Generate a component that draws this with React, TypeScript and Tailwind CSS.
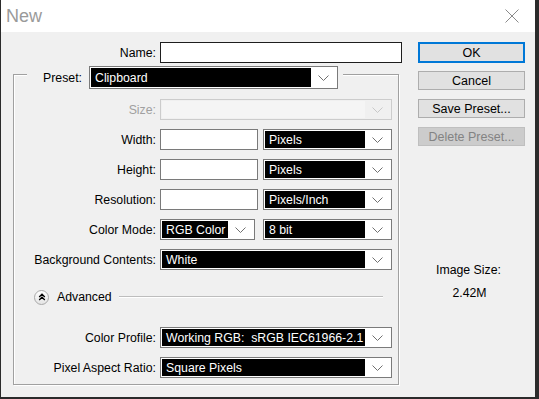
import React from 'react';

const Chevron = ({ disabled = false }: { disabled?: boolean }) => (
  <svg width="11" height="6" viewBox="0 0 11 6" className="block">
    <path d="M0.5 0.5 L5.5 5.5 L10.5 0.5" fill="none" stroke={disabled ? '#c8c8c8' : '#707070'} strokeWidth="1" />
  </svg>
);

type SelectProps = { value?: string; className?: string; disabled?: boolean };

const Select = ({ value = '', className = '', disabled = false }: SelectProps) => (
  <div
    className={`flex p-px border ${
      disabled ? 'border-[#cccccc] bg-[#f0f0f0]' : 'border-[#7a7a7a] bg-white'
    } ${className}`}
  >
    <div
      className={`flex-1 flex items-center pl-[4px] whitespace-pre ${
        disabled ? 'bg-[#f5f5f5]' : 'bg-black text-white'
      }`}
    >
      {value}
    </div>
    <div className="w-[25px] flex items-center justify-center">
      <Chevron disabled={disabled} />
    </div>
  </div>
);

const Row = ({
  label,
  disabled = false,
  children,
}: {
  label: string;
  disabled?: boolean;
  children: React.ReactNode;
}) => (
  <div className="flex items-center h-[21px]">
    <div className={`w-[142px] text-right ${disabled ? 'text-[#a0a0a0]' : 'text-black'}`}>{label}</div>
    <div className="ml-[4px] flex gap-[5px]">{children}</div>
  </div>
);

const TextBox = ({ className = '' }: { className?: string }) => (
  <input type="text" className={`h-[21px] border border-[#7a7a7a] bg-white outline-none ${className}`} />
);

const App = () => {
  return (
    <div className="w-[539px] h-[399px] flex flex-col border-l border-r-4 border-b-2 border-[#2b2b2b] font-['Liberation_Sans',Arial,sans-serif] text-[12.3px] leading-[14px] text-black">
      {/* Title bar */}
      <div className="h-[32px] bg-white flex items-center justify-between pl-[5px] pr-[16px]">
        <span className="text-[18px] leading-[20px] text-[#9a9a9a]">New</span>
        <svg width="14" height="14" viewBox="0 0 14 14">
          <path d="M0.5 0.5 L13.5 13.5 M13.5 0.5 L0.5 13.5" stroke="#8a8a8a" strokeWidth="1" fill="none" />
        </svg>
      </div>

      <div className="flex-1 bg-[#f0f0f0] flex">
        {/* Left side */}
        <div className="w-[401px] pl-[12px] pt-[10px] flex flex-col">
          <div className="flex items-center h-[21px]">
            <div className="w-[143px] text-right">Name:</div>
            <input
              type="text"
              className="ml-[4px] w-[242px] h-[21px] border border-[#1e1e1e] bg-white outline-none"
            />
          </div>

          {/* Preset group */}
          <div className="mt-[11px] w-[386px] border border-[#a0a0a0] shadow-[1px_1px_0_#ffffff,inset_1px_1px_0_#ffffff] flex flex-col pb-[6px]">
            <div className="-mt-[9px] ml-[13px] w-[316px] flex items-center bg-[#f0f0f0]">
              <div className="w-[55px] text-right">Preset:</div>
              <Select value="Clipboard" className="ml-[7px] w-[249px] h-[23px]" />
            </div>

            <div className="mt-[10px] flex flex-col gap-[9px]">
              <Row label="Size:" disabled>
                <Select disabled className="w-[232px] h-[21px]" />
              </Row>
              <Row label="Width:">
                <TextBox className="w-[98px]" />
                <Select value="Pixels" className="w-[129px] h-[21px]" />
              </Row>
              <Row label="Height:">
                <TextBox className="w-[98px]" />
                <Select value="Pixels" className="w-[129px] h-[21px]" />
              </Row>
              <Row label="Resolution:">
                <TextBox className="w-[98px]" />
                <Select value="Pixels/Inch" className="w-[129px] h-[21px]" />
              </Row>
              <Row label="Color Mode:">
                <Select value="RGB Color" className="w-[95px] h-[21px]" />
                <Select value="8 bit" className="ml-[3px] w-[129px] h-[21px]" />
              </Row>
              <Row label="Background Contents:">
                <Select value="White" className="w-[232px] h-[21px]" />
              </Row>
            </div>

            {/* Advanced toggle */}
            <div className="mt-[20px] ml-[20px] mr-[15px] h-[14px] flex items-center">
              <div className="w-[15px] h-[15px] rounded-full border border-[#a8a8a8] bg-linear-to-b from-white to-[#e4e4e4] flex items-center justify-center">
                <svg width="8" height="8" viewBox="0 0 8 8">
                  <path d="M1.2 4 L4 1.2 L6.8 4 M1.2 7 L4 4.2 L6.8 7" fill="none" stroke="#000000" strokeWidth="1.3" />
                </svg>
              </div>
              <span className="ml-[8px]">Advanced</span>
              <div className="ml-[7px] flex-1 h-[2px] border-t border-[#bdbdbd] border-b border-b-white" />
            </div>

            <div className="mt-[23px] flex flex-col gap-[9px]">
              <Row label="Color Profile:">
                <Select value="Working RGB:  sRGB IEC61966-2.1" className="w-[232px] h-[21px]" />
              </Row>
              <Row label="Pixel Aspect Ratio:">
                <Select value="Square Pixels" className="w-[232px] h-[21px]" />
              </Row>
            </div>
          </div>
        </div>

        {/* Right side */}
        <div className="ml-[16px] w-[107px] pt-[10px] flex flex-col text-[12.5px]">
          <button className="h-[21px] border-2 border-[#0078d7] bg-[#e1e1e1]">OK</button>
          <button className="mt-[8px] h-[19px] border border-[#adadad] bg-[#e1e1e1]">Cancel</button>
          <button className="mt-[9px] h-[19px] border border-[#adadad] bg-[#e1e1e1]">Save Preset...</button>
          <button className="mt-[9px] h-[19px] border border-[#bfbfbf] bg-[#cccccc] text-[#838383]">
            Delete Preset...
          </button>

          <div className="mt-[117px] pr-[6px] text-center text-[12.3px]">Image Size:</div>
          <div className="mt-[9px] pr-[4px] text-center text-[12.3px]">2.42M</div>
        </div>
      </div>
    </div>
  );
};

export default App;
